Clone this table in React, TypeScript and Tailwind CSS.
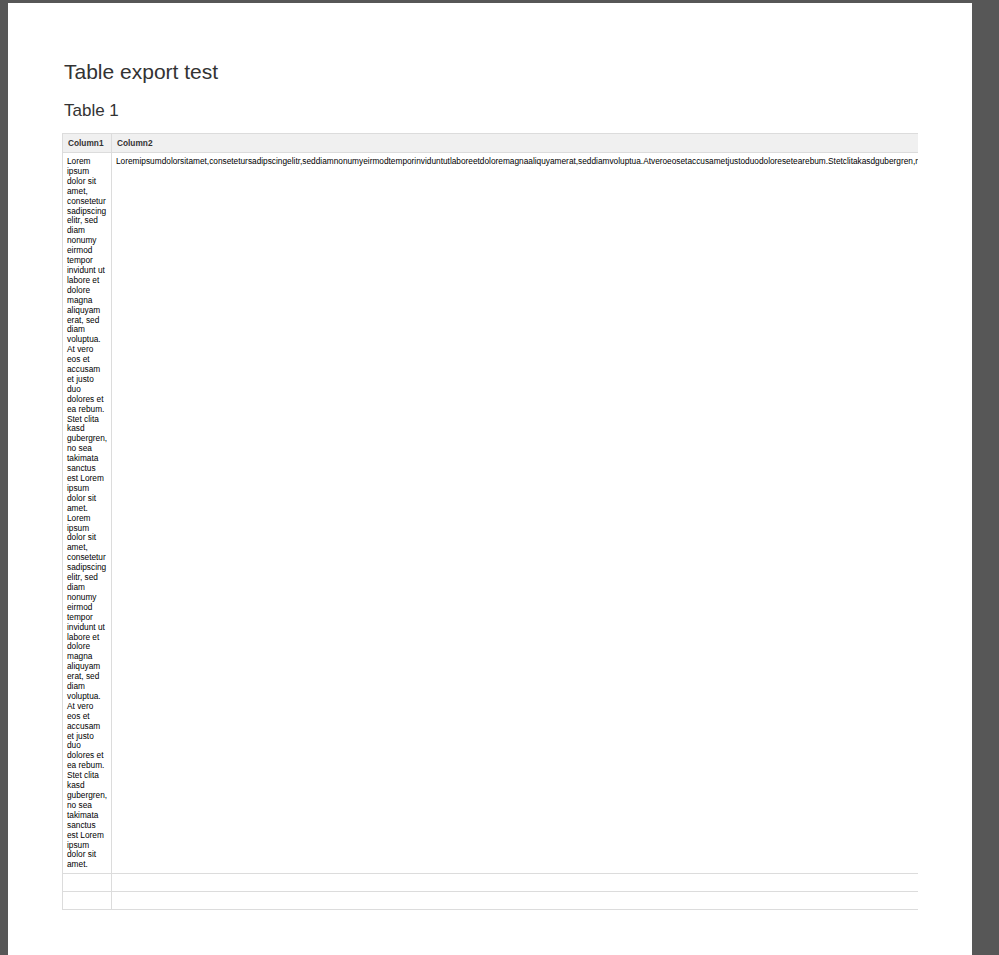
const col1 =
  'Lorem ipsum dolor sit amet, consetetur sadipscing elitr, sed diam nonumy eirmod tempor invidunt ut labore et dolore magna aliquyam erat, sed diam voluptua. At vero eos et accusam et justo duo dolores et ea rebum. Stet clita kasd gubergren, no sea takimata sanctus est Lorem ipsum dolor sit amet. Lorem ipsum dolor sit amet, consetetur sadipscing elitr, sed diam nonumy eirmod tempor invidunt ut labore et dolore magna aliquyam erat, sed diam voluptua. At vero eos et accusam et justo duo dolores et ea rebum. Stet clita kasd gubergren, no sea takimata sanctus est Lorem ipsum dolor sit amet.';

const col2 =
  'Loremipsumdolorsitamet,consetetursadipscingelitr,seddiamnonumyeirmodtemporinviduntutlaboreetdoloremagnaaliquyamerat,seddiamvoluptua.Atveroeosetaccusametjustoduodoloresetearebum.Stetclitakasdgubergren,noseatakimatasanctusestLoremipsumdolorsitamet.';

export default function App() {
  return (
    <div className="min-h-[955px] bg-[#575757] pl-[8px] pt-[3px] overflow-hidden" style={{ fontFamily: '"Liberation Sans", Arial, sans-serif' }}>
      <div className="w-[964px] min-h-[952px] bg-white pl-[56px] pt-[56px] text-[#333]">
        <h1 className="text-[21px] leading-[26px]">Table export test</h1>
        <h2 className="mt-[15px] text-[17px] leading-[22px]">Table 1</h2>

        <div className="mt-[11px] ml-[-2px] w-[856px] overflow-hidden">
          <table className="border-collapse border border-[#dcdcdc] text-[8.3px] text-black">
            <thead>
              <tr className="bg-[#f0f0f0] h-[19px]">
                <th className="w-[49px] border border-[#dcdcdc] px-[5px] text-left font-bold text-[#333]">Column1</th>
                <th className="border border-[#dcdcdc] px-[5px] text-left font-bold text-[#333]">Column2</th>
              </tr>
            </thead>
            <tbody>
              <tr>
                <td className="w-[49px] max-w-[49px] border border-[#dcdcdc] px-[4px] pt-[4px] pb-[3px] align-top leading-[9.9px]">{col1}</td>
                <td className="border border-[#dcdcdc] px-[4px] pt-[4px] align-top whitespace-nowrap leading-[9.9px]">{col2}</td>
              </tr>
              <tr className="h-[18px]">
                <td className="border border-[#dcdcdc]"></td>
                <td className="border border-[#dcdcdc]"></td>
              </tr>
              <tr className="h-[18px]">
                <td className="border border-[#dcdcdc]"></td>
                <td className="border border-[#dcdcdc]"></td>
              </tr>
            </tbody>
          </table>
        </div>
      </div>
    </div>
  );
}
